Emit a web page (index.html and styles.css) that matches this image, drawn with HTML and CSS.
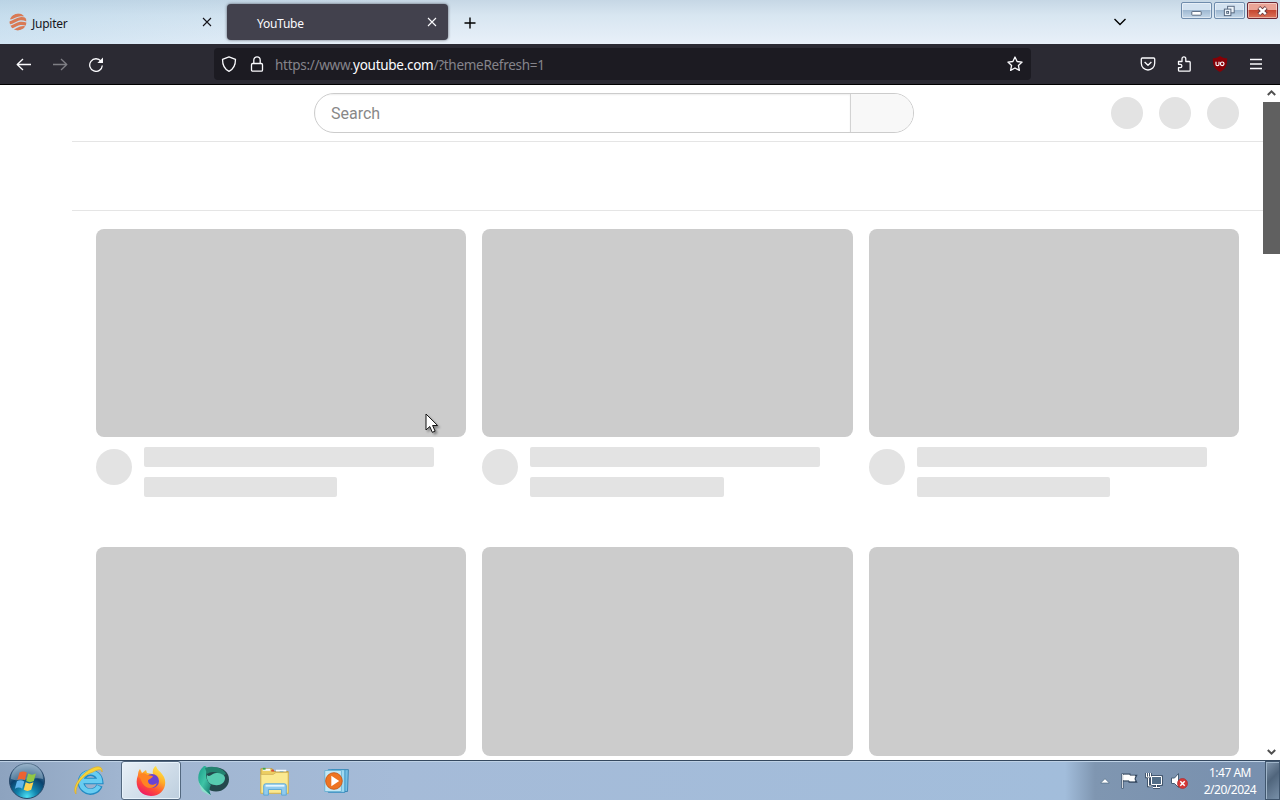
FILE: index.html
```html
<!DOCTYPE html>
<html lang="en">
<head>
  <meta charset="UTF-8" />
  <meta name="viewport" content="width=device-width, initial-scale=1.0"/>
  <title>YouTube</title>
  <link rel="stylesheet" href="styles.css">
</head>
<body>
  <div class="desktop">
    <!-- Tabs -->
    <header class="tabbar">
      <div class="tab">
        <svg class="favicon" viewBox="0 0 18 18">
          <defs><clipPath id="planet"><circle cx="9" cy="9" r="8.500"/></clipPath></defs>
          <g clip-path="url(#planet)" fill="none" stroke="#d97a55" stroke-width="3.200">
            <path d="M1 5C6 4 8 0 15 2"/>
            <path d="M0 10C7 9 9 3 18 7"/>
            <path d="M1 14.500C7 13 10 8 18 11.500"/>
            <path d="M5 18C9 17 11 13 17 15"/>
          </g>
        </svg>
        <span class="tab-title">Jupiter</span>
        <svg class="tab-close" viewBox="0 0 10 10"><path d="M1 1l8 8M9 1L1 9"/></svg>
      </div>
      <div class="tab active">
        <span class="tab-title">YouTube</span>
        <svg class="tab-close" viewBox="0 0 10 10"><path d="M1 1l8 8M9 1L1 9"/></svg>
      </div>
      <svg class="new-tab" viewBox="0 0 12 12"><path d="M6 .5v11M.5 6h11"/></svg>
      <svg class="all-tabs" viewBox="0 0 14 8"><path d="M1.500 1l5.500 5.500L12.500 1"/></svg>
      <div class="window-buttons">
        <span class="win-btn"><svg viewBox="0 0 30 16"><rect x="10" y="9" width="10" height="4" rx=".5" fill="#fff" stroke="#52637a"/></svg></span>
        <span class="win-btn"><svg viewBox="0 0 30 16"><g fill="#edf4fa" stroke="#52637a"><rect x="13" y="3.500" width="7" height="7"/><rect x="9.500" y="6.500" width="7" height="7"/><rect x="12" y="9" width="2" height="2"/></g></svg></span>
        <span class="win-btn close"><svg viewBox="0 0 30 16"><path d="M11 5l8 7M19 5l-8 7" stroke="#6a3a3d" stroke-width="4.500"/><path d="M11.500 5.200l7 6.600M18.500 5.200l-7 6.600" stroke="#fff" stroke-width="2.600"/></svg></span>
      </div>
    </header>

    <!-- Toolbar -->
    <nav class="toolbar">
      <svg class="icon" viewBox="0 0 16 16"><path d="M15 8.500H1.500M7 3L1.200 8.500 7 14"/></svg>
      <svg class="icon disabled" viewBox="0 0 16 16"><path d="M1 8.500h13.500M9 3l5.800 5.500L9 14"/></svg>
      <svg class="icon" viewBox="0 0 16 16"><path d="M13 5.200A6.300 6.300 0 1 0 14.300 9.500"/><path d="M15 1.500v5.600H9.400z" fill="#fbfbfe" stroke="none"/></svg>
      <div class="urlbar">
        <svg class="icon" viewBox="0 0 16 16"><path d="M8 .8l6.500 2.500c0 6-1.500 9.800-6.500 12C3 13.100 1.500 9.300 1.500 3.300z"/></svg>
        <svg class="icon lock" viewBox="0 0 16 16"><rect x="2.500" y="7.500" width="11" height="7.700" rx="1.200"/><path d="M4.800 7.500V4a3.200 3.200 0 0 1 6.400 0v3.500"/></svg>
        <span class="url">https://www.<b>youtube.com</b>/?themeRefresh=1</span>
        <svg class="icon star" viewBox="0 0 16 16"><path d="M8 1l2.100 4.500 5 .6-3.700 3.400 1 4.900L8 12l-4.400 2.400 1-4.900L.9 6.100l5-.6z"/></svg>
      </div>
      <div class="extensions">
        <svg class="icon" viewBox="0 0 16 16"><path d="M2.300 2h11.400c.6 0 1 .4 1 1v4.300a6.700 6.700 0 0 1-13.400 0V3c0-.6.400-1 1-1zM4.600 6L8 9.200 11.400 6"/></svg>
        <svg class="icon" viewBox="0 0 16 16"><path d="M2.500 5.500H6V2.800a1.900 1.900 0 0 1 3.800 0v2.700h3.400c.6 0 1 .4 1 1v7.700c0 .6-.4 1-1 1H3.500c-.6 0-1-.4-1-1v-2.500h1.700a1.600 1.600 0 0 0 0-3.400H2.500z"/></svg>
        <svg class="icon ublock" viewBox="0 0 16 16"><path d="M8 0c2 1.600 4.500 2.300 7.200 2.300 0 6.500-1 10.500-7.200 13.700C1.800 12.800.8 8.800.8 2.300 3.500 2.300 6 1.600 8 0z" fill="#850006" stroke="none"/><path d="M4 5.800v2.400c0 1 .6 1.500 1.500 1.500S7 9.200 7 8.200V5.800"/><circle cx="10.200" cy="7.800" r="1.800"/></svg>
        <svg class="icon" viewBox="0 0 16 16"><path d="M2 3.500h12M2 8h12M2 12.500h12"/></svg>
      </div>
    </nav>

    <!-- Page -->
    <div class="viewport">
      <main class="page">
        <div class="masthead">
          <div class="search">
            <div class="search-input">Search</div>
            <div class="search-button"></div>
          </div>
          <div class="masthead-buttons">
            <i></i><i></i><i></i>
          </div>
        </div>
        <div class="chips"></div>
        <div class="grid">
          <div class="card">
            <div class="thumb"></div>
            <div class="details"><div class="avatar"></div><div class="lines"><div class="line"></div><div class="line short"></div></div></div>
          </div>
          <div class="card">
            <div class="thumb"></div>
            <div class="details"><div class="avatar"></div><div class="lines"><div class="line"></div><div class="line short"></div></div></div>
          </div>
          <div class="card">
            <div class="thumb"></div>
            <div class="details"><div class="avatar"></div><div class="lines"><div class="line"></div><div class="line short"></div></div></div>
          </div>
          <div class="card"><div class="thumb"></div></div>
          <div class="card"><div class="thumb"></div></div>
          <div class="card"><div class="thumb"></div></div>
        </div>
      </main>
      <div class="scrollbar">
        <svg viewBox="0 0 17 17"><path d="M4.800 10l3.700-3.700 3.700 3.700"/></svg>
        <div class="scroll-thumb"></div>
        <svg class="down" viewBox="0 0 17 17"><path d="M4.800 7l3.700 3.700L12.200 7"/></svg>
      </div>
    </div>

    <!-- Taskbar -->
    <footer class="taskbar">
      <div class="start">
        <svg viewBox="0 0 38 38">
          <defs>
            <radialGradient id="orb" cx=".5" cy=".95" r=".95"><stop offset="0" stop-color="#4ce0f4"/><stop offset=".3" stop-color="#1284ad"/><stop offset=".62" stop-color="#0b416c"/><stop offset="1" stop-color="#7e9dbb"/></radialGradient>
          </defs>
          <circle cx="19" cy="19" r="17.500" fill="url(#orb)" stroke="#29496a"/>
          <path d="M3 17a16 16 0 0 1 32 0c-9-3-23 4-32 0z" fill="#c7dae8" opacity=".38"/>
          <path d="M11.500 10.500c2.500-1.500 5-1.400 7.300.1l-2 7.600c-2.500-1.500-5-1.500-7.500-.1z" fill="#ed6331"/>
          <path d="M20.200 11.500c2.700 1.500 5 1.500 7.700 0l-2.100 7.500c-2.600 1.500-5 1.500-7.600 0z" fill="#91c846"/>
          <path d="M8.900 19.300c2.500-1.400 5-1.300 7.400.1l-2.100 7.300c-2.400-1.500-4.800-1.400-7.300 0z" fill="#62b5ec"/>
          <path d="M17.700 20.300c2.600 1.500 5 1.500 7.700 0l-2.200 7.500c-2.600 1.500-5 1.400-7.500 0z" fill="#ffd34f"/>
        </svg>
      </div>
      <div class="task">
        <svg viewBox="0 0 32 32">
          <path d="M26.500 20.500a9.500 9.500 0 1 1 .5-4.500H10" fill="none" stroke="#218ac3" stroke-width="6.500"/>
          <path d="M26 21a9.500 9.500 0 1 1 1-5H10" fill="none" stroke="#68ccf1" stroke-width="4.500"/>
          <path d="M3 29C-2 23 8 8 20 3c6-2.500 10-1 9 4 0-3-4-3-9 0C9 10 2 21 3 29z" fill="#f7d537" stroke="#dfac28" stroke-width=".7"/>
        </svg>
      </div>
      <div class="task current">
        <svg viewBox="0 0 32 32">
          <defs><linearGradient id="fox" x1=".85" y1="0" x2=".3" y2="1"><stop offset="0" stop-color="#fff04b"/><stop offset=".4" stop-color="#ffac28"/><stop offset=".7" stop-color="#ff5036"/><stop offset="1" stop-color="#ed1768"/></linearGradient></defs>
          <path d="M3 10c0-3 1-5 2-6l2 4 4-3 1 3 6 1c-1-4 1-7 3-8 1 4 4 5 6 8l2 3c4 9-2 19-13 19C4 31-1 20 3 10z" fill="url(#fox)"/>
          <circle cx="17" cy="16" r="7" fill="#6a43d3"/>
          <path d="M3 11c4-4 7-3 9-1l6 1c-1 3-5 3-5 5 0 4 5 5 9 2-2 6-10 7-14 1-2-3-2-6-5-8z" fill="#ff8423"/>
        </svg>
      </div>
      <div class="task">
        <svg viewBox="0 0 32 32">
          <defs><linearGradient id="mint" x1="0" y1="0" x2="1" y2="1"><stop offset="0" stop-color="#1b9c88"/><stop offset=".5" stop-color="#3fc4a6"/><stop offset="1" stop-color="#137369"/></linearGradient></defs>
          <ellipse cx="19" cy="14.500" rx="13" ry="12" fill="#24484c"/>
          <path d="M14 30C-1 23-2 8 7 1c3 0 3 2 3 5-2 6 0 11 4 14-2 3-2 6 0 10z" fill="url(#mint)"/>
          <path d="M8 3c8-3 18 0 21 6l-4 2C20 6 14 6 10 9z" fill="#23826f"/>
          <path d="M10 10c3 3 5-2 9-2 5 0 9 2 9 5 0 5-5 8-10 7-5 0-9-4-8-10z" fill="#57cbb0"/>
          <path d="M1 16c5 9 8 9 13 15L5 26z" fill="#8ce0cb"/>
        </svg>
      </div>
      <div class="task">
        <svg viewBox="0 0 34 32">
          <path d="M2 3h12l2 3h15v23H2z" fill="#edce62" stroke="#bd9c41"/>
          <path d="M4 4h8M18 5h11" stroke="#f8fcff" stroke-width="2"/>
          <path d="M4 3h3" stroke="#42a449" stroke-width="2"/><path d="M13 5h3" stroke="#d84f31" stroke-width="2"/><path d="M22 7h4" stroke="#399bd3" stroke-width="2"/>
          <path d="M2 9h13l3-2h13v22H2z" fill="#fbe990" stroke="#d5b75d"/>
          <path d="M5 31V21q0-2 2-2h20q2 0 2 2v10h-5v-6H10v6z" fill="#91cbee" stroke="#59a6d8"/>
          <path d="M7 21h20" stroke="#e6f6ff" stroke-width="2"/>
        </svg>
      </div>
      <div class="task media">
        <svg viewBox="0 0 32 32">
          <path d="M10 3h19l-1 25H10z" fill="#75bfe4" stroke="#327eae"/>
          <path d="M6 3h19v26H6z" fill="#9ed9f0" stroke="#3289bd"/>
          <path d="M2 4h19v24H2z" fill="#c1e7f5" stroke="#68afd1"/>
          <circle cx="12.500" cy="16" r="9.500" fill="#ee7422" stroke="#c75818"/>
          <path d="M9.500 10v12l9-6z" fill="#fff"/>
        </svg>
      </div>
      <div class="tray">
        <svg class="expand" viewBox="0 0 10 6"><path d="M5 .7L9.300 5H.7z" fill="#fff" stroke="#45617b" stroke-width=".6"/></svg>
        <svg viewBox="0 0 18 18"><path d="M2.500 1.500v15M3.500 2.500h6v1.300h6.500l-1.500 3 1.500 3H9.500V8.500h-6z" fill="#fff" stroke="#33465d" stroke-width="2"/><path d="M2.500 2v14M3.500 3h6v1h5.500l-1 3 1 2H9.500V8h-6z" fill="#fff" stroke="#fff" stroke-width=".8"/></svg>
        <svg viewBox="0 0 18 18"><path d="M6.500 4.500h10v8h-10zM11.500 13v2.500M8 15.500h7M3.500 6v8h3M1.500 1v4h4V1" fill="none" stroke="#33465d" stroke-width="2.600"/><path d="M6.500 4.500h10v8h-10z" fill="#526d87" stroke="#fff"/><path d="M11.500 13v2.500M8 15.500h7M3.500 6v8h3M1.500 1v4h4V1M3.500 1v4" fill="none" stroke="#fff"/></svg>
        <svg viewBox="0 0 18 18"><path d="M1.500 6h3l4-4.500v14l-4-4h-3z" fill="#fff" stroke="#465c74"/><circle cx="12.500" cy="11.500" r="5" fill="#d73836" stroke="#aa2d31" stroke-width=".7"/><path d="M10.300 9.300l4.400 4.400M14.700 9.300l-4.400 4.400" stroke="#fff" stroke-width="1.500"/></svg>
        <div class="clock"><span>1:47 AM</span><span>2/20/2024</span></div>
        <div class="show-desktop"></div>
      </div>
    </footer>

    <svg class="cursor" viewBox="0 0 14 21"><path d="M1 1v16l3.800-3.500 2.500 5.800 2.800-1.200-2.500-5.600h5z" fill="#fff" stroke="#111"/></svg>
  </div>
</body>
</html>
```

FILE: styles.css
```css
* {
  box-sizing: border-box;
}

body {
  margin: 0;
  font-family: "Noto Sans", "Open Sans", sans-serif;
}

svg {
  display: block;
  flex-shrink: 0;
}

.desktop {
  position: relative;
  width: 1280px;
  height: 800px;
  display: flex;
  flex-direction: column;
  overflow: hidden;
  background: #fff;
}

/* tabs */
.tabbar {
  height: 44px;
  display: flex;
  align-items: center;
  background:
    linear-gradient(90deg, rgba(165, 205, 230, .35), transparent 30%),
    linear-gradient(#c6d7e5, #d8e6f1 35%, #e8f0f9);
}

.tab {
  width: 222px;
  height: 36px;
  display: flex;
  align-items: center;
  padding: 0 10px 0 9px;
  font-size: 12px;
  color: #15141a;
}

.tab.active {
  margin-left: 5px;
  width: 221px;
  padding: 0 11px 0 30px;
  border-radius: 4px;
  background: #42414d;
  box-shadow: 0 0 3px rgba(40, 40, 50, .7);
  color: #fbfbfe;
}

.favicon {
  width: 18px;
  height: 18px;
  margin-right: 5px;
}

.tab-title {
  flex: 1;
  letter-spacing: -.25px;
  padding-top: 2px;
}

.tab-close {
  width: 10px;
  height: 10px;
}

.tab-close path,
.new-tab path,
.all-tabs path {
  fill: none;
  stroke: currentColor;
  stroke-width: 1.1;
}

.new-tab {
  width: 12px;
  height: 12px;
  margin: 1px 0 0 16px;
}

.new-tab path,
.all-tabs path {
  stroke-width: 1.4;
}

.all-tabs {
  width: 14px;
  height: 8px;
  margin-left: auto;
}

.window-buttons {
  display: flex;
  align-self: flex-start;
  gap: 2px;
  padding-top: 2px;
  margin: 0 2px 0 54px;
}

.win-btn {
  width: 31px;
  height: 17px;
  border: 1px solid #6f8cac;
  border-radius: 2px;
  background: linear-gradient(#d3e2f0 45%, #9fb9d2 50%, #c5d8e9);
  box-shadow: inset 0 0 0 1px rgba(255, 255, 255, .45);
}

.win-btn svg {
  width: 29px;
  height: 15px;
}

.win-btn.close {
  border-color: #6d2632;
  background: linear-gradient(#eaa496 45%, #c64731 50%, #dc7359);
}

/* toolbar */
.toolbar {
  height: 41px;
  display: flex;
  align-items: center;
  gap: 20px;
  padding: 0 16px;
  border-bottom: 1px solid #000;
  background: #2b2a33;
}

.icon {
  width: 16px;
  height: 16px;
  fill: none;
  stroke: #fbfbfe;
  stroke-width: 1.3;
  stroke-linejoin: round;
}

.icon.disabled {
  opacity: .4;
}

.urlbar {
  width: 817px;
  height: 32px;
  margin-left: 90px;
  display: flex;
  align-items: center;
  padding: 0 8px 0 7px;
  border-radius: 4px;
  background: #1c1b22;
}

.lock {
  margin: 0 10px 0 12px;
}

.url {
  flex: 1;
  padding-top: 1px;
  font-size: 13.500px;
  letter-spacing: -.28px;
  color: #85848b;
}

.url b {
  font-weight: 400;
  color: #fbfbfe;
}

.extensions {
  display: flex;
  gap: 20px;
  margin-left: auto;
}

.ublock {
  stroke-width: 1.2;
}

/* page */
.viewport {
  height: 675px;
  display: flex;
}

.page {
  flex: 1;
  padding-left: 72px;
  overflow: hidden;
}

.masthead {
  height: 57px;
  display: flex;
  align-items: center;
  justify-content: space-between;
  padding: 0 24px 0 242px;
  border-bottom: 1px solid #e5e5e5;
}

.search {
  width: 600px;
  height: 40px;
  display: flex;
  border: 1px solid #ccc;
  border-radius: 20px;
  overflow: hidden;
  font: 16px Roboto, sans-serif;
  color: #888;
}

.search-input {
  flex: 1;
  padding-left: 16px;
  line-height: 39px;
  box-shadow: inset 0 1px 2px #eee;
}

.search-button {
  width: 63px;
  border-left: 1px solid #d3d3d3;
  background: #f8f8f8;
}

.masthead-buttons {
  display: flex;
  gap: 16px;
}

.masthead-buttons i {
  width: 32px;
  height: 32px;
  border-radius: 50%;
  background: #e3e3e3;
}

.chips {
  height: 69px;
  border-bottom: 1px solid #e5e5e5;
}

.grid {
  display: grid;
  grid-template-columns: repeat(3, 1fr);
  grid-auto-rows: 318.3px;
  column-gap: 16px;
  padding: 18px 24px 0;
}

.thumb {
  aspect-ratio: 16 / 9;
  border-radius: 8px;
  background: #ccc;
}

.details {
  display: flex;
  gap: 12px;
  padding-top: 10px;
}

.avatar {
  width: 36px;
  height: 36px;
  margin-top: 2px;
  border-radius: 50%;
  background: #e3e3e3;
}

.lines {
  flex: 1;
}

.line {
  width: 90%;
  height: 20px;
  margin-bottom: 10px;
  border-radius: 2px;
  background: #e3e3e3;
}

.line.short {
  width: 60%;
}

.scrollbar {
  width: 17px;
  display: flex;
  flex-direction: column;
  background: #fff;
}

.scrollbar svg {
  width: 17px;
  height: 17px;
  fill: none;
  stroke: #505050;
  stroke-width: 2;
}

.scroll-thumb {
  height: 152px;
  background: #606060;
}

.scrollbar .down {
  margin-top: auto;
}

/* taskbar */
.taskbar {
  height: 40px;
  display: flex;
  align-items: center;
  border-top: 1px solid #34485f;
  box-shadow: inset 0 1px #bed1e5;
  background: linear-gradient(90deg, #8da3bf, #a0b5d0 120px, #a5bbd8 400px, #a2bddb 1065px, #7f96b1 1095px, #778fae);
}

.start {
  width: 59px;
  padding-left: 8px;
}

.start svg {
  width: 38px;
  height: 38px;
}

.task {
  width: 60px;
  height: 39px;
  display: flex;
  align-items: center;
  justify-content: center;
  margin-right: 2px;
}

.task svg {
  width: 32px;
  height: 32px;
}

.task.current {
  border: 1px solid #53687f;
  border-radius: 3px;
  background: linear-gradient(135deg, #e8f0f7, #bdcede);
  box-shadow: inset 0 0 0 1px #e8f3fc;
}

.task.media svg {
  width: 28px;
  height: 28px;
}

.tray {
  display: flex;
  align-items: center;
  margin-left: auto;
  height: 39px;
}

.tray svg {
  width: 18px;
  height: 18px;
  margin-right: 7px;
}

.tray .expand {
  width: 10px;
  height: 6px;
  margin-right: 10px;
}

.clock {
  width: 70px;
  display: flex;
  flex-direction: column;
  align-items: center;
  font-size: 12px;
  line-height: 17px;
  letter-spacing: -.5px;
  color: #fff;
}

.show-desktop {
  width: 15px;
  height: 39px;
  border: 1px solid #40566e;
  box-shadow: inset 1px 1px #a0b5c9;
  background: linear-gradient(135deg, #8297ae, #50657c 45%, #7890a9);
}

.cursor {
  position: absolute;
  left: 425px;
  top: 413px;
  width: 14px;
  height: 21px;
  filter: drop-shadow(2px 2px 1px rgba(0, 0, 0, .35));
}
```
